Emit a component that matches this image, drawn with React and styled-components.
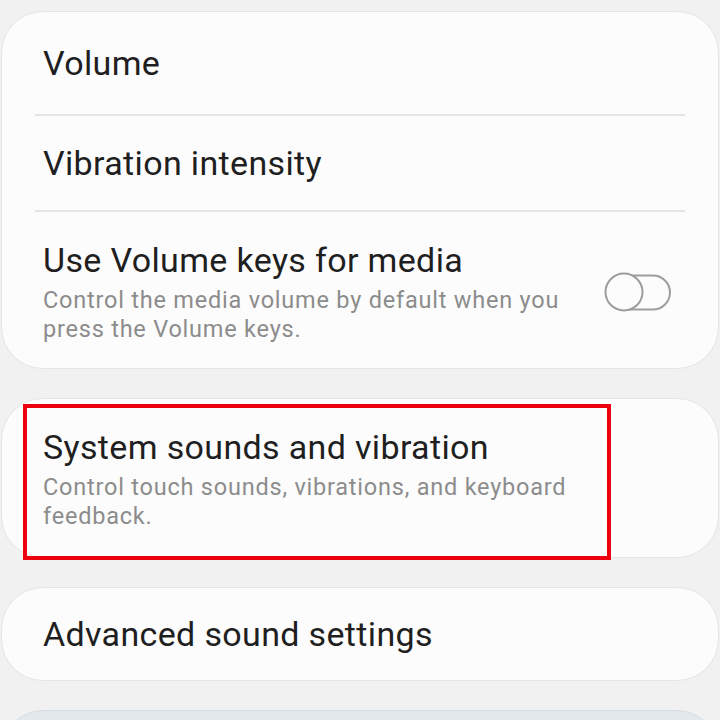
import React from "react";
import styled, { createGlobalStyle } from "styled-components";

const Global = createGlobalStyle`
  html, body {
    margin: 0;
    padding: 0;
    background: #f1f1f1;
  }
  body {
    font-family: Roboto, "Noto Sans", "Liberation Sans", sans-serif;
    -webkit-font-smoothing: antialiased;
  }
`;

const Screen = styled.div`
  width: 720px;
  height: 720px;
  overflow: hidden;
  background: #f1f1f1;
  padding: 11px 1px 0;
  box-sizing: border-box;
  display: flex;
  flex-direction: column;
  gap: 29px;
`;

const Card = styled.section`
  position: relative;
  flex-shrink: 0;
  background: ${(p) => (p.$tint ? "#e3e8ec" : "#fcfcfc")};
  border: 1px solid ${(p) => (p.$tint ? "#d8dde2" : "#e5e5e5")};
  border-radius: 42px;
  display: flex;
  flex-direction: column;
  min-height: ${(p) => p.$minHeight || 0}px;
`;

const Row = styled.div`
  display: flex;
  align-items: center;
  gap: 30px;
  box-sizing: border-box;
  min-height: ${(p) => p.$height || 94}px;
  padding: ${(p) => p.$pad || "0"} 46px ${(p) => p.$padBottom || "0"} 41px;
`;

const Divider = styled.div`
  height: 2px;
  margin: 0 33px;
  background: #e4e4e4;
`;

const TextBlock = styled.div`
  flex: 1;
  min-width: 0;
  max-width: ${(p) => p.$maxWidth || "none"};
`;

const Title = styled.div`
  font-size: 34px;
  line-height: 40px;
  letter-spacing: 0.35px;
  color: #1f1f1f;
`;

const Summary = styled.div`
  margin-top: 6px;
  font-size: 23.5px;
  line-height: 29px;
  letter-spacing: 0.78px;
  color: #8c8c8c;
`;

const Highlight = styled.div`
  position: absolute;
  left: 21px;
  top: 5px;
  width: 588px;
  height: 156px;
  border: 4px solid #ec0010;
  box-sizing: border-box;
  pointer-events: none;
`;

const SwitchIcon = () => (
  <svg width="68" height="40" viewBox="0 0 68 40" aria-hidden="true">
    <rect
      x="9"
      y="3.5"
      width="57"
      height="34"
      rx="17"
      fill="none"
      stroke="#9d9d9d"
      strokeWidth="2"
    />
    <circle cx="20" cy="20" r="18.5" fill="#fcfcfc" stroke="#9d9d9d" strokeWidth="2" />
  </svg>
);

export default function App() {
  return (
    <>
      <Global />
      <Screen>
        <Card>
          <Row $height={102}>
            <TextBlock>
              <Title>Volume</Title>
            </TextBlock>
          </Row>
          <Divider />
          <Row $height={94}>
            <TextBlock>
              <Title>Vibration intensity</Title>
            </TextBlock>
          </Row>
          <Divider />
          <Row $pad="28px" $padBottom="24px" $height={0}>
            <TextBlock>
              <Title>Use Volume keys for media</Title>
              <Summary>
                Control the media volume by default when you press the Volume keys.
              </Summary>
            </TextBlock>
            <SwitchIcon />
          </Row>
        </Card>

        <Card>
          <Row $pad="28px" $padBottom="26px" $height={0}>
            <TextBlock $maxWidth="590px">
              <Title>System sounds and vibration</Title>
              <Summary>
                Control touch sounds, vibrations, and keyboard feedback.
              </Summary>
            </TextBlock>
          </Row>
          <Highlight />
        </Card>

        <Card>
          <Row $height={92}>
            <TextBlock>
              <Title>Advanced sound settings</Title>
            </TextBlock>
          </Row>
        </Card>

        <Card $tint $minHeight={120} />
      </Screen>
    </>
  );
}
